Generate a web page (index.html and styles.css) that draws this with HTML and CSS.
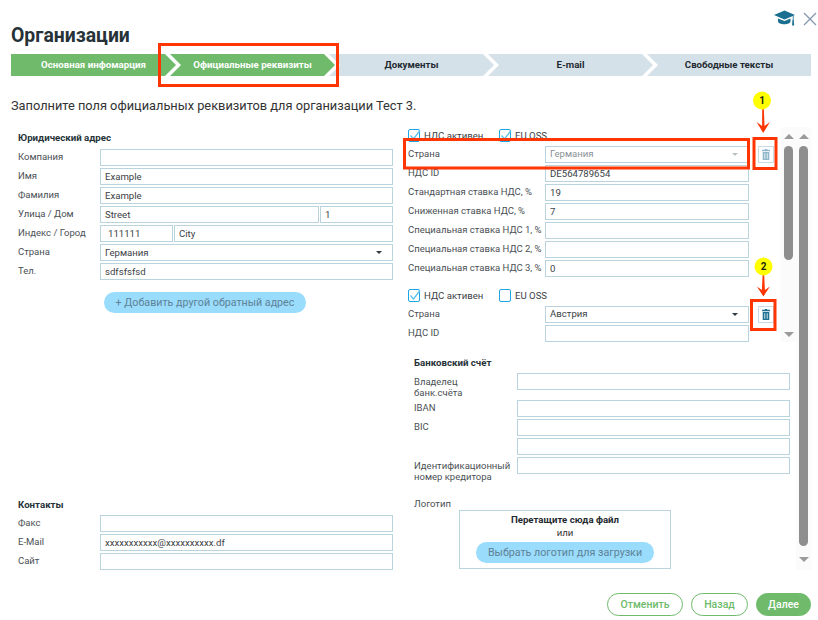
FILE: index.html
```html
<!DOCTYPE html>
<html lang="ru">
<head>
<meta charset="utf-8">
<title>Организации</title>
<link rel="stylesheet" href="styles.css">
</head>
<body>
<div class="page">
  <header class="header">
    <h1 class="title">Организации</h1>
    <div class="top-icons">
      <svg class="cap" viewBox="0 0 21 16" width="21" height="16"><path d="M10.500 .5 0 5l10.500 4.500 8.300-3.600v3.600h.8V5.500L21 5z"/><path d="M4 8.400v3.100c0 1.500 3 2.700 6.300 2.700s6.200-1.200 6.200-2.700V8.400l-6 2.500z"/><path d="M18.500 9.500h1.300l.4 6h-2.100z"/></svg>
      <svg class="close" viewBox="0 0 14 14" width="14" height="14"><path d="M1 1l12 12M13 1 1 13"/></svg>
    </div>
  </header>

  <nav class="steps">
    <div class="step step-first step-done">Основная инфомарция</div>
    <div class="step step-done">Официальные реквизиты</div>
    <div class="step">Документы</div>
    <div class="step">E-mail</div>
    <div class="step step-last">Свободные тексты</div>
  </nav>

  <p class="intro">Заполните поля официальных реквизитов для организации Тест 3.</p>

  <main class="main">
    <section class="left">
      <div class="block">
        <h2 class="heading">Юридический адрес</h2>
        <div class="row"><span class="label">Компания</span><div class="field grow"></div></div>
        <div class="row"><span class="label">Имя</span><div class="field grow">Example</div></div>
        <div class="row"><span class="label">Фамилия</span><div class="field grow">Example</div></div>
        <div class="row"><span class="label">Улица / Дом</span><div class="field grow">Street</div><div class="field house">1</div></div>
        <div class="row"><span class="label">Индекс / Город</span><div class="field zip">111111</div><div class="field grow">City</div></div>
        <div class="row"><span class="label">Страна</span><div class="field grow select">Германия<i class="caret"></i></div></div>
        <div class="row"><span class="label">Тел.</span><div class="field grow">sdfsfsfsd</div></div>
        <button class="pill add-address">+ Добавить другой обратный адрес</button>
      </div>
      <div class="block">
        <h2 class="heading heading-contacts">Контакты</h2>
        <div class="row"><span class="label">Факс</span><div class="field grow"></div></div>
        <div class="row"><span class="label">E-Mail</span><div class="field grow">xxxxxxxxxxx@xxxxxxxxxx.df</div></div>
        <div class="row"><span class="label">Сайт</span><div class="field grow"></div></div>
      </div>
    </section>

    <section class="right">
      <div class="right-main">
        <div class="vat-pane">
          <div class="vat-list">
            <div class="vat-group">
              <div class="checks">
                <label class="check check-wide"><i class="box"><svg viewBox="0 0 13 13" width="13" height="13"><path d="M2.500 6.500 5.500 10 12 1.500"/></svg></i>НДС активен</label>
                <label class="check"><i class="box"><svg viewBox="0 0 13 13" width="13" height="13"><path d="M2.500 6.500 5.500 10 12 1.500"/></svg></i>EU OSS</label>
              </div>
              <div class="row row-vat"><span class="label">Страна</span><div class="field select disabled">Германия<i class="caret"></i></div>
                <button class="trash trash-off"><svg viewBox="0 0 10 14" width="8" height="11"><path d="M3.500 0h3v1H10v2H0V1h3.500zM.8 3.800h8.400V14H.8zM3 5.500v7h1v-7zM6 5.500v7h1v-7z" fill-rule="evenodd"/></svg></button></div>
              <div class="row row-vat"><span class="label">НДС ID</span><div class="field">DE564789654</div></div>
              <div class="row row-vat"><span class="label">Стандартная ставка НДС, %</span><div class="field">19</div></div>
              <div class="row row-vat"><span class="label">Сниженная ставка НДС, %</span><div class="field">7</div></div>
              <div class="row row-vat"><span class="label">Специальная ставка НДС 1, %</span><div class="field"></div></div>
              <div class="row row-vat"><span class="label">Специальная ставка НДС 2, %</span><div class="field"></div></div>
              <div class="row row-vat"><span class="label">Специальная ставка НДС 3, %</span><div class="field">0</div></div>
            </div>
            <div class="vat-group vat-second">
              <div class="checks">
                <label class="check check-wide"><i class="box"><svg viewBox="0 0 13 13" width="13" height="13"><path d="M2.500 6.500 5.500 10 12 1.500"/></svg></i>НДС активен</label>
                <label class="check"><i class="box"></i>EU OSS</label>
              </div>
              <div class="row row-vat"><span class="label">Страна</span><div class="field select">Австрия<i class="caret"></i></div>
                <button class="trash"><svg viewBox="0 0 10 14" width="8" height="11"><path d="M3.500 0h3v1H10v2H0V1h3.500zM.8 3.800h8.400V14H.8zM3 5.500v7h1v-7zM6 5.500v7h1v-7z" fill-rule="evenodd"/></svg></button></div>
              <div class="row row-vat"><span class="label">НДС ID</span><div class="field"></div></div>
            </div>
          </div>
          <div class="scroll scroll-inner"><i class="arrow-up"></i><i class="thumb"></i><i class="arrow-down"></i></div>
        </div>

        <div class="bank">
          <h2 class="heading heading-bank">Банковский счёт</h2>
          <div class="row row-bank row-owner"><span class="label label-multi">Владелец<br>банк.счёта</span><div class="field grow"></div></div>
          <div class="row row-bank"><span class="label">IBAN</span><div class="field grow"></div></div>
          <div class="row row-bank"><span class="label">BIC</span><div class="field grow"></div></div>
          <div class="row row-bank"><span class="label"></span><div class="field grow"></div></div>
          <div class="row row-bank row-creditor"><span class="label label-multi">Идентификационный<br>номер кредитора</span><div class="field grow"></div></div>
          <div class="logo-label">Логотип</div>
          <div class="dropzone">
            <strong class="drop-title">Перетащите сюда файл</strong>
            <span class="drop-or">или</span>
            <button class="pill upload">Выбрать логотип для загрузки</button>
          </div>
        </div>
      </div>
      <div class="scroll scroll-outer"><i class="arrow-up"></i><i class="thumb"></i><i class="arrow-down"></i></div>
    </section>
  </main>

  <footer class="footer">
    <button class="action cancel">Отменить</button>
    <button class="action back">Назад</button>
    <button class="action next">Далее</button>
  </footer>

  <svg class="marks" viewBox="0 0 818 620" width="818" height="620">
    <g class="frames">
      <rect x="159.500" y="44.500" width="178" height="41"/>
      <rect x="404.500" y="139.500" width="344" height="28.500"/>
      <rect x="754" y="138.500" width="22" height="30"/>
      <rect x="751.500" y="300.500" width="23.500" height="29"/>
    </g>
    <g class="arrows">
      <path d="M762.200 108h1.600l.7 18 5.500-4-6.800 11-6.600-11 5.500 4z"/>
      <path d="M762.600 275h1.600l.7 15 5-3.500-6.500 10-6.500-10 5 3.500z"/>
    </g>
    <circle class="badge" cx="762" cy="100.500" r="9"/>
    <circle class="badge" cx="763.500" cy="266.500" r="9"/>
    <text class="badge-text" x="762" y="104">1</text>
    <text class="badge-text" x="763.500" y="270">2</text>
  </svg>
</div>
</body>
</html>
```
FILE: styles.css
```css
* { box-sizing: border-box; }
html, body { margin: 0; padding: 0; background: #fff; }
body { font-family: Roboto, "Liberation Sans", sans-serif; color: #3c4246; }
.page { position: relative; width: 818px; height: 620px; overflow: hidden; padding: 0 7px 0 11px; display: flex; flex-direction: column; }

.header { height: 54px; display: flex; justify-content: space-between; align-items: flex-start; }
.title { margin: 24px 0 0; font-size: 19.400px; line-height: 24px; font-weight: 700; color: #263238; }
.top-icons { display: flex; gap: 8px; align-items: flex-start; padding-top: 10px; margin-right: -6px; }
.cap { fill: #1b6f90; }
.close { margin-top: 2px; fill: none; stroke: #7f94ad; stroke-width: 1.200; }

.steps { display: flex; height: 22px; width: 800px; }
.step { width: 165px; margin-right: -6px; flex: none; height: 22px; line-height: 22px; text-align: center; font-size: 9.700px; font-weight: 700; color: #1f2a30; background: #d5e1e9;
  clip-path: polygon(0 0, calc(100% - 11px) 0, 100% 50%, calc(100% - 11px) 100%, 0 100%, 11px 50%); }
.step-done { background: #6fbb6b; color: #fff; }
.step-first { clip-path: polygon(0 0, calc(100% - 11px) 0, 100% 50%, calc(100% - 11px) 100%, 0 100%); }
.step-last { width: 164px; margin-right: 0; clip-path: polygon(0 0, 100% 0, 100% 100%, 0 100%, 11px 50%); }

.intro { margin: 21px 0 13px; font-size: 12.800px; line-height: 17px; color: #333; }

.main { display: flex; height: 445px; gap: 10px; padding-left: 7px; }
.left { width: 375px; display: flex; flex-direction: column; justify-content: space-between; }
.right { width: 408px; display: flex; }
.right-main { width: 393px; display: flex; flex-direction: column; }

.heading { margin: 5px 0 5px; font-size: 9.700px; line-height: 12px; font-weight: 700; color: #263238; }
.heading-contacts { margin-bottom: 4px; }
.heading-bank { margin: 15px 0 4px; }

.row { display: flex; height: 19px; }
.label { flex: none; width: 82px; font-size: 9.500px; line-height: 16px; color: #4a5054; white-space: nowrap; }
.field { height: 17px; border: 1px solid #b9d3df; padding-left: 4px; font-size: 9.600px; line-height: 16px; color: #3c4246; background: #fff; white-space: nowrap; overflow: hidden; }
.grow { flex: 1; }
.house { width: 73px; margin-left: 1px; }
.zip { width: 73px; margin-right: 1px; padding-left: 7px; }
.select { display: flex; justify-content: space-between; align-items: center; padding-right: 10px; }
.caret { width: 0; height: 0; border-left: 3px solid transparent; border-right: 3px solid transparent; border-top: 3px solid #2f3a40; }
.disabled { color: #8a9196; }
.disabled .caret { border-top-color: #bcc3c7; }

.pill { display: block; border: 0; border-radius: 11px; background: #99dcfc; color: #5f8297; font-family: inherit; font-size: 10.700px; padding: 0; white-space: nowrap; }
.add-address { width: 202px; height: 21px; margin: 10px 0 0 86px; }

.vat-pane { display: flex; height: 215px; overflow: hidden; flex: none; }
.vat-list { width: 378px; padding-left: 5px; flex: none; }
.vat-second { margin-top: 8px; }
.checks { display: flex; height: 19px; padding-top: 1px; }
.check { display: flex; align-items: center; gap: 4px; height: 14px; font-size: 9.600px; color: #3c4246; }
.check-wide { width: 91px; }
.box { width: 12px; height: 13px; flex: none; border: 1px solid #1ea7e4; border-radius: 2px; position: relative; display: block; }
.box svg { position: absolute; left: -1px; top: -1px; fill: none; stroke: #5cc0ec; stroke-width: 1.300; }
.row-vat .label { width: 137px; }
.row-vat .field { width: 204px; padding-left: 4px; }
.row-vat .select { padding-bottom: 1px; }
.trash { width: 16px; height: 17px; margin-left: 9px; padding: 0; border: 1px solid #c9dbe3; background: #fff; display: flex; align-items: center; justify-content: center; }
.trash svg { fill: #1b6f90; }
.trash-off svg { fill: #8fb6c9; }

.scroll { width: 15px; flex: none; display: flex; flex-direction: column; align-items: center; padding-top: 7px; background: #fbfbfb; }
.arrow-up { width: 0; height: 0; border-left: 5px solid transparent; border-right: 5px solid transparent; border-bottom: 5px solid #9a9a9a; margin-bottom: 7px; flex: none; }
.arrow-down { width: 0; height: 0; border-left: 5px solid transparent; border-right: 5px solid transparent; border-top: 5px solid #9a9a9a; flex: none; }
.thumb { width: 9px; background: #8e8e8e; border-radius: 5px; flex: none; }
.scroll-inner .thumb { height: 114px; margin-bottom: 72px; }
.scroll-outer { height: 443px; }
.scroll-outer .thumb { height: 400px; margin-bottom: 11px; }

.bank { padding: 0 6px 0 11px; }
.row-bank .label { width: 103px; }
.row-bank .label-multi { line-height: 11px; padding-top: 3px; }
.row-owner { height: 27px; }
.row-creditor { height: 24px; }
.logo-label { margin-top: 17px; font-size: 9.500px; line-height: 12px; color: #4a5054; }
.dropzone { margin: 0 0 0 45px; width: 212px; height: 59px; border: 1px solid #b9d3df; display: flex; flex-direction: column; align-items: center; padding-top: 3px; }
.drop-title { font-size: 9.600px; line-height: 12px; color: #1f2a30; }
.drop-or { font-size: 9.600px; line-height: 12px; margin-top: 1px; color: #333; }
.upload { width: 178px; height: 21px; margin-top: 3px; }

.footer { display: flex; justify-content: flex-end; gap: 8px; margin-top: 21px; }
.action { height: 23px; border-radius: 12px; border: 1px solid #6fbb6b; background: #fff; color: #6fbb6b; font-family: inherit; font-size: 10.500px; font-weight: 500; padding: 0; }
.cancel { width: 76px; }
.back { width: 57px; }
.next { width: 55px; background: #6fbb6b; color: #fff; }

.marks { position: absolute; left: 0; top: 0; pointer-events: none; }
.frames rect { fill: none; stroke: #ff3503; stroke-width: 3; }
.arrows path { fill: #ff3503; }
.badge { fill: #ffff00; }
.badge-text { font-size: 10px; font-weight: 700; text-anchor: middle; fill: #1d2a10; }
```
